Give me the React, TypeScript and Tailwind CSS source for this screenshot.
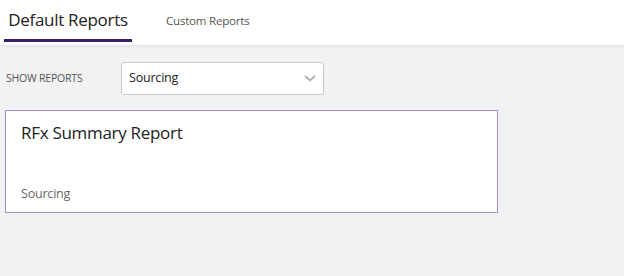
import React from "react";

function Chevron() {
  return (
    <svg width="12" height="7" viewBox="0 0 12 7" fill="none">
      <path d="M1 1 L6 5.5 L11 1" stroke="#b0b0b0" strokeWidth="1.8" />
    </svg>
  );
}

export default function App() {
  return (
    <div
      className="w-[624px] h-[276px] bg-[#f2f2f2] overflow-hidden"
      style={{ fontFamily: '"Open Sans", "Noto Sans", sans-serif' }}
    >
      <div className="h-[45px] bg-white flex items-end shadow-[0_1px_3px_rgba(0,0,0,0.08)] relative z-10">
        <div className="ml-[4px] w-[128px] h-[45px] flex flex-col">
          <div className="flex-1 flex items-center justify-center pt-[1px] text-[17px] tracking-[-0.3px] text-[#222]">
            Default Reports
          </div>
          <div className="h-[3px] bg-[#3a1d6e] mb-[3px]" />
        </div>
        <div className="ml-[34px] h-[45px] flex items-center pb-[4px] text-[11.5px] tracking-[-0.2px] text-[#555]">
          Custom Reports
        </div>
      </div>

      <div className="flex items-center pt-[17px] pl-[6px]">
        <div className="w-[115px] text-[10.5px] tracking-[-0.2px] text-[#555]">SHOW REPORTS</div>
        <div className="w-[203px] h-[33px] bg-white border border-[#c8c8c8] rounded-[3px] flex items-center justify-between pl-[7px] pr-[7px] text-[12.5px] tracking-[-0.2px] text-[#222]">
          <span>Sourcing</span>
          <Chevron />
        </div>
      </div>

      <div className="mt-[15px] ml-[5px] w-[493px] h-[103px] bg-white border border-[#a98bd9] flex flex-col justify-between pl-[15px] pt-[9px] pb-[8px]">
        <div className="text-[17px] tracking-[-0.3px] text-[#222]">RFx Summary Report</div>
        <div className="text-[12.5px] tracking-[-0.2px] text-[#666]">Sourcing</div>
      </div>
    </div>
  );
}
